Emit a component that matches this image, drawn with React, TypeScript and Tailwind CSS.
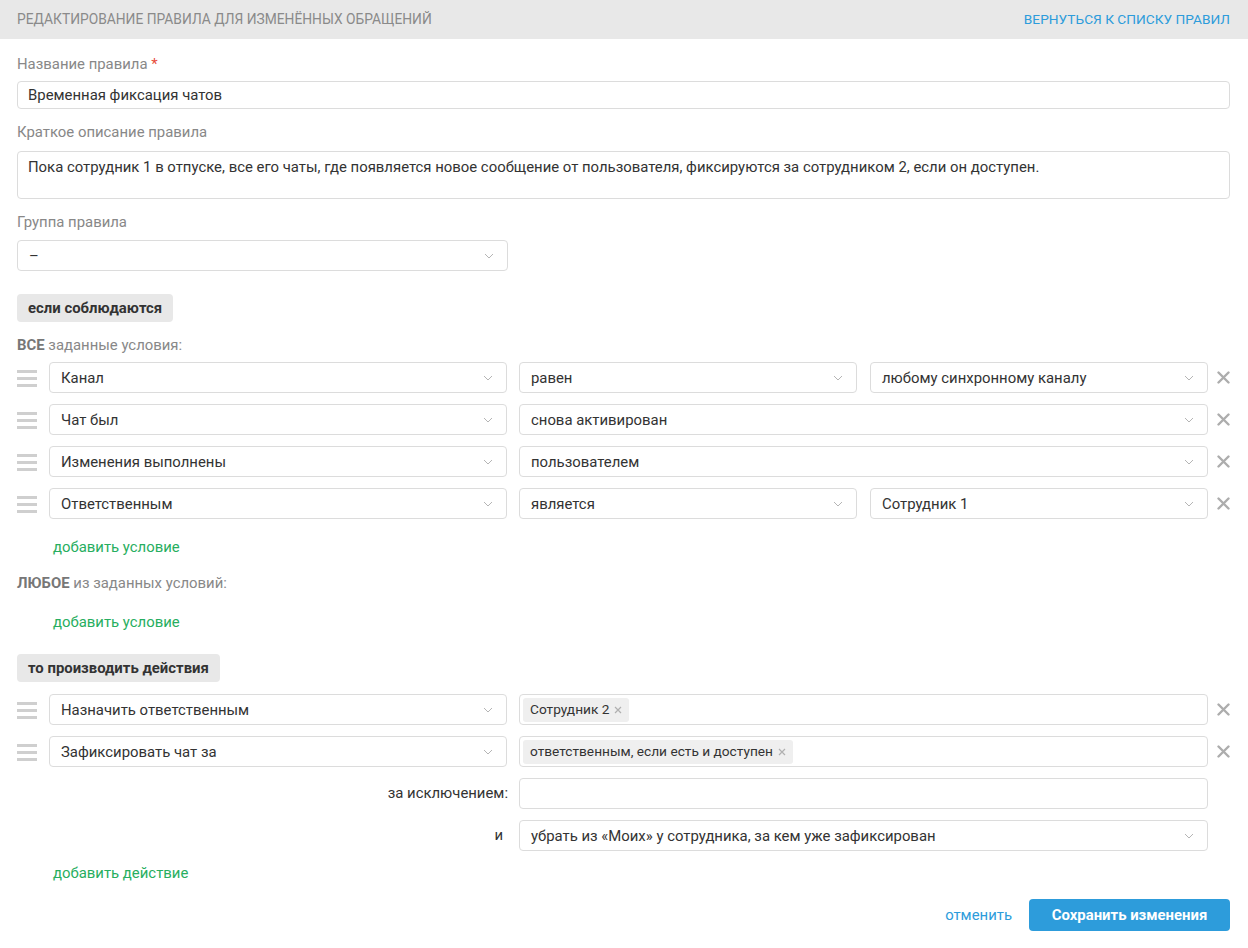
import React from "react";

const font = { fontFamily: "Roboto, 'Noto Sans', Arial, sans-serif" };

function Chevron() {
  return (
    <svg width="10" height="6" viewBox="0 0 10 6" className="shrink-0">
      <path d="M1 1l4 4 4-4" fill="none" stroke="#b5b5b5" strokeWidth="1" />
    </svg>
  );
}

function Handle() {
  return (
    <div className="w-[20px] shrink-0 flex flex-col gap-[4px] pt-[1px]">
      <div className="h-[3px] bg-[#cfcfcf]" />
      <div className="h-[3px] bg-[#cfcfcf]" />
      <div className="h-[3px] bg-[#cfcfcf]" />
    </div>
  );
}

function Cross() {
  return (
    <div className="w-[22px] shrink-0 flex justify-end">
      <svg width="13" height="13" viewBox="0 0 13 13">
        <path d="M1.5 1.5l10 10M11.5 1.5l-10 10" stroke="#adadad" strokeWidth="2.4" strokeLinecap="round" />
      </svg>
    </div>
  );
}

function Select({ value, className = "" }: { value: string; className?: string }) {
  return (
    <div
      className={`h-[31px] border border-[#dcdcdc] rounded-[4px] bg-white flex items-center justify-between pl-[11px] pr-[13px] text-[14.9px] leading-[20px] text-[#333] ${className}`}
    >
      <span>{value}</span>
      <Chevron />
    </div>
  );
}

function Tag({ text }: { text: string }) {
  return (
    <span className="h-[24px] inline-flex items-center gap-[5px] bg-[#efefef] rounded-[3px] px-[7px] text-[13.7px] text-[#333]">
      {text}
      <svg width="8" height="8" viewBox="0 0 8 8">
        <path d="M1 1l6 6M7 1l-6 6" stroke="#b0b0b0" strokeWidth="1.2" />
      </svg>
    </span>
  );
}

function ConditionRow({ a, b, c }: { a: string; b: string; c?: string }) {
  return (
    <div className="flex items-center">
      <Handle />
      <Select value={a} className="w-[458px] ml-[12px]" />
      <div className="flex-1 flex gap-[13px] ml-[12px]">
        <Select value={b} className="flex-1" />
        {c && <Select value={c} className="flex-1" />}
      </div>
      <Cross />
    </div>
  );
}

function Badge({ text }: { text: string }) {
  return (
    <div className="inline-flex h-[28px] items-center px-[11px] bg-[#e8e8e8] rounded-[4px] text-[14.9px] leading-[20px] font-bold text-[#333]">
      {text}
    </div>
  );
}

function Label({ children, className = "" }: { children: React.ReactNode; className?: string }) {
  return <div className={`text-[14.9px] leading-[20px] text-[#888] ${className}`}>{children}</div>;
}

function AddLink({ text, className = "" }: { text: string; className?: string }) {
  return <div className={`pl-[36px] text-[14.9px] leading-[20px] text-[#27ae60] ${className}`}>{text}</div>;
}

export default function App() {
  return (
    <div className="w-[1248px] h-[948px] bg-white" style={font}>
      <div className="h-[39px] bg-[#e8e8e8] flex items-center justify-between pl-[17px] pr-[18px]">
        <span className="text-[13.8px] uppercase text-[#8a8a8a]">
          Редактирование правила для изменённых обращений
        </span>
        <span className="text-[13.7px] uppercase text-[#2d9cdb]">Вернуться к списку правил</span>
      </div>

      <div className="pl-[17px] pr-[18px]">
        <Label className="pt-[15px]">
          Название правила <span className="text-[#e74c3c]">*</span>
        </Label>
        <div className="mt-[7px] h-[28px] border border-[#dcdcdc] rounded-[4px] flex items-center px-[10px] text-[14.9px] text-[#333]">
          Временная фиксация чатов
        </div>

        <Label className="mt-[13px]">Краткое описание правила</Label>
        <div className="mt-[9px] h-[48px] border border-[#dcdcdc] rounded-[4px] px-[10px] pt-[5px] text-[14.9px] leading-[20px] text-[#333]">
          Пока сотрудник 1 в отпуске, все его чаты, где появляется новое сообщение от пользователя, фиксируются за
          сотрудником 2, если он доступен.
        </div>

        <Label className="mt-[13px]">Группа правила</Label>
        <Select value="–" className="mt-[8px] w-[491px]" />

        <div className="mt-[23px] flex">
          <Badge text="если соблюдаются" />
        </div>
        <Label className="mt-[13px]">
          <b className="text-[#777]">ВСЕ</b> заданные условия:
        </Label>

        <div className="mt-[7px] flex flex-col gap-[11px]">
          <ConditionRow a="Канал" b="равен" c="любому синхронному каналу" />
          <ConditionRow a="Чат был" b="снова активирован" />
          <ConditionRow a="Изменения выполнены" b="пользователем" />
          <ConditionRow a="Ответственным" b="является" c="Сотрудник 1" />
        </div>

        <AddLink text="добавить условие" className="mt-[18px]" />
        <Label className="mt-[16px]">
          <b className="text-[#777]">ЛЮБОЕ</b> из заданных условий:
        </Label>
        <AddLink text="добавить условие" className="mt-[19px]" />

        <div className="mt-[22px] flex">
          <Badge text="то производить действия" />
        </div>

        <div className="mt-[12px] flex flex-col gap-[11px]">
          <div className="flex items-center">
            <Handle />
            <Select value="Назначить ответственным" className="w-[458px] ml-[12px]" />
            <div className="flex-1 ml-[12px] h-[31px] border border-[#dcdcdc] rounded-[4px] flex items-center px-[3px]">
              <Tag text="Сотрудник 2" />
            </div>
            <Cross />
          </div>
          <div className="flex items-center">
            <Handle />
            <Select value="Зафиксировать чат за" className="w-[458px] ml-[12px]" />
            <div className="flex-1 ml-[12px] h-[31px] border border-[#dcdcdc] rounded-[4px] flex items-center px-[3px]">
              <Tag text="ответственным, если есть и доступен" />
            </div>
            <Cross />
          </div>
          <div className="flex items-center">
            <div className="w-[491px] text-right text-[14.9px] text-[#333]">за исключением:</div>
            <div className="flex-1 ml-[11px] h-[31px] border border-[#dcdcdc] rounded-[4px]" />
            <div className="w-[22px]" />
          </div>
          <div className="flex items-center">
            <div className="w-[486px] text-right text-[14.9px] text-[#333]">и</div>
            <Select value="убрать из «Моих» у сотрудника, за кем уже зафиксирован" className="flex-1 ml-[16px]" />
            <div className="w-[22px]" />
          </div>
        </div>

        <AddLink text="добавить действие" className="mt-[12px]" />

        <div className="mt-[16px] flex items-center justify-end gap-[17px]">
          <span className="text-[14.9px] text-[#2d9cdb]">отменить</span>
          <div className="w-[201px] h-[32px] rounded-[4px] bg-[#2d9cdb] flex items-center justify-center text-[14.9px] font-bold text-white">
            Сохранить изменения
          </div>
        </div>
      </div>
    </div>
  );
}
